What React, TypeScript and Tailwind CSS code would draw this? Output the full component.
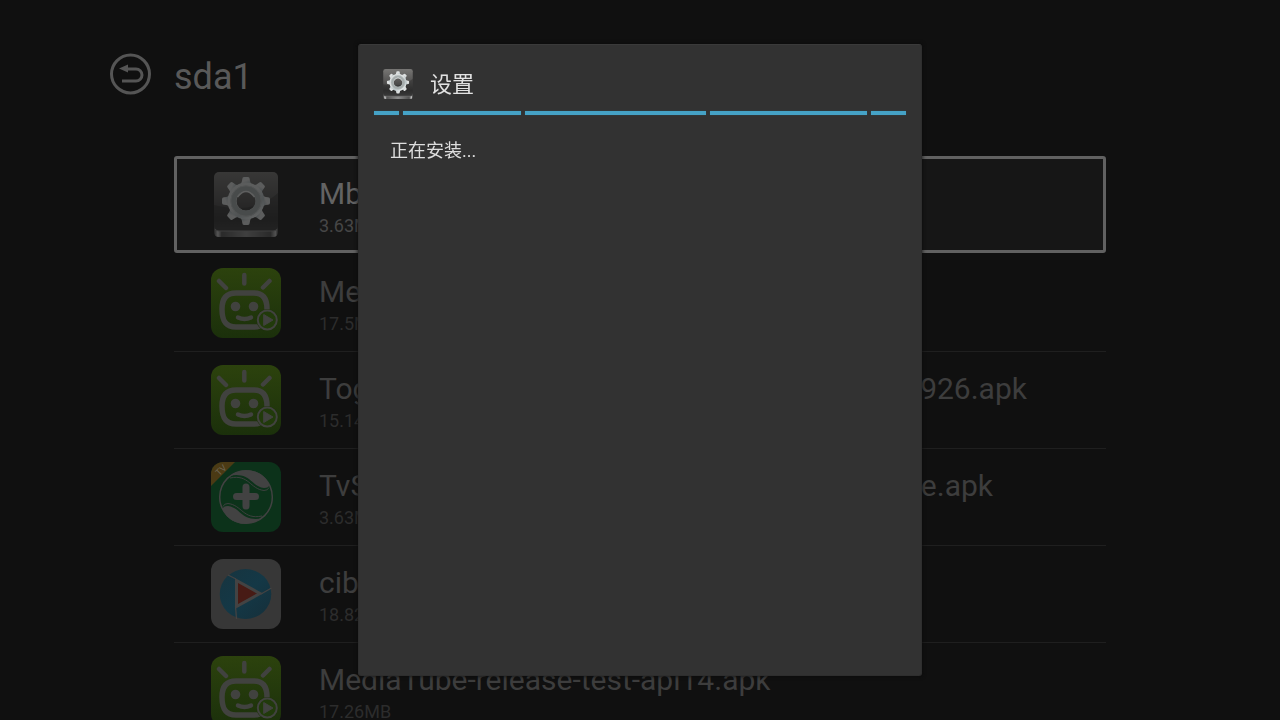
import { useId, type ReactNode } from "react";

const teeth = Array.from({ length: 8 }, (_, i) => i * 45);

function GearIcon({ className }: { className: string }) {
  const id = useId();
  return (
    <svg viewBox="0 0 64 65" className={className} aria-hidden="true">
      <defs>
        <linearGradient id={`${id}p`} x1="0" y1="0" x2="0" y2="1">
          <stop offset="0" stopColor="#777674" />
          <stop offset=".45" stopColor="#555453" />
          <stop offset=".8" stopColor="#343434" />
          <stop offset="1" stopColor="#4a4a4a" />
        </linearGradient>
        <linearGradient id={`${id}b`} x1="0" x2="1">
          <stop offset="0" stopColor="#424242" />
          <stop offset=".06" stopColor="#d0d0d0" />
          <stop offset=".12" stopColor="#505050" />
          <stop offset=".5" stopColor="#8c8c8c" />
          <stop offset=".88" stopColor="#505050" />
          <stop offset=".96" stopColor="#c0c0c0" />
          <stop offset="1" stopColor="#424242" />
        </linearGradient>
        <linearGradient id={`${id}g`} x1="0" y1="0" x2=".7" y2="1">
          <stop offset="0" stopColor="#d8dddd" />
          <stop offset=".5" stopColor="#e0e2e2" />
          <stop offset=".75" stopColor="#b8c3c6" />
          <stop offset="1" stopColor="#eff3f3" />
        </linearGradient>
      </defs>
      <path d="M0 53h64v7q0 5-5 5H5q-5 0-5-5z" fill={`url(#${id}b)`} />
      <rect width="64" height="59" rx="5" fill={`url(#${id}p)`} />
      <path d="M0 33Q40 43 64 21V54q0 5-5 5H5q-5 0-5-5z" fill="#222" opacity=".4" />
      <path d="M1 57q1.500 2 4 2h54q2.500 0 4-2" fill="none" stroke="#888" strokeWidth="1" />
      <g fill={`url(#${id}g)`}>
        {teeth.map((angle) => (
          <path key={angle} d="M24.500 14Q28 12 28.300 7 28.400 5 30 5h4Q35.600 5 35.700 7 36 12 39.500 14z" transform={`rotate(${angle} 32 29)`} />
        ))}
        <path fillRule="evenodd" d="M32 10.500a18.500 18.500 0 1 0 0 37 18.500 18.500 0 0 0 0-37zm0 9a9.500 9.500 0 1 1 0 19 9.500 9.500 0 0 1 0-19z" />
      </g>
      <circle cx="32" cy="29" r="12.600" fill="none" stroke="#a6adad" strokeWidth="5.500" />
      <circle cx="32" cy="29" r="15.200" fill="none" stroke="#c0c6c6" strokeWidth="1" />
      <path d="M23.500 25q8.500-11 17 0" fill="none" stroke="#e5e8e8" strokeWidth="1.500" />
    </svg>
  );
}

function MediaIcon() {
  const id = useId();
  return (
    <svg viewBox="0 0 70 70" className="size-[70px]" aria-hidden="true">
      <defs>
        <linearGradient id={id} x1="0" y1="0" x2="0" y2="1">
          <stop offset="0" stopColor="#2c420d" />
          <stop offset="1" stopColor="#1b300b" />
        </linearGradient>
      </defs>
      <rect width="70" height="70" rx="12" fill={`url(#${id})`} />
      <g fill="none" stroke="#41423f" strokeLinecap="round">
        <path d="M8 13l7 7M33.300 7v8.500M58.500 13l-6.500 6.500" strokeWidth="4.500" />
        <path d="M25 25h18c9 0 13 6 13 16s-2 18-13 18H25c-11 0-14-7-14-18s5-16 14-16z" strokeWidth="5.500" />
        <path d="M27 49.500q6.500 3 13 0" strokeWidth="4.500" />
      </g>
      <circle cx="24.500" cy="38.500" r="4.800" fill="#41423f" />
      <circle cx="42.500" cy="38.500" r="4.800" fill="#41423f" />
      <circle cx="56.300" cy="52" r="10.800" fill="#1e330b" />
      <circle cx="56.300" cy="52" r="9.500" fill="#213a0b" stroke="#41423f" strokeWidth="2" />
      <path d="M52.700 46.500v11l9.300-5.500z" fill="#41423f" stroke="#41423f" strokeLinejoin="round" />
    </svg>
  );
}

function CrossIcon() {
  const id = useId();
  return (
    <svg viewBox="0 0 70 70" className="size-[70px]" aria-hidden="true">
      <clipPath id={id}>
        <rect width="70" height="70" rx="12" />
      </clipPath>
      <g clipPath={`url(#${id})`}>
        <rect width="70" height="70" fill="#0c321a" />
        <path d="M0 0h24L0 24z" fill="#4b3a14" />
        <text x="-5" y="4" transform="translate(9 8) rotate(-45)" fontSize="9" fontFamily="Roboto, sans-serif" fill="#6b6452">TV</text>
      </g>
      <circle cx="35" cy="35" r="26.300" fill="none" stroke="#424242" strokeWidth="1.500" />
      {[0, 180].map((angle) => (
        <g key={angle} transform={`rotate(${angle} 35 35)`}>
          <path d="M19 14C30 5 51 6 58 22q1 4-5 4C43 25 40 15 30 13.500Q24 12.500 19 14z" fill="#424242" />
          <path d="M19 16c19-4 20 11 34 12.500q4 0 5-3" fill="none" stroke="#424242" strokeWidth=".9" />
        </g>
      ))}
      <path d="M35 25v19M25.500 34.500h19" stroke="#424242" strokeWidth="7" strokeLinecap="round" />
    </svg>
  );
}

function PlayerIcon() {
  const id = useId();
  return (
    <svg viewBox="0 0 70 70" className="size-[70px]" aria-hidden="true">
      <defs>
        <linearGradient id={id} x1="0" y1="0" x2="1" y2="1">
          <stop offset="0" stopColor="#17343f" />
          <stop offset=".5" stopColor="#143846" />
          <stop offset="1" stopColor="#152f3a" />
        </linearGradient>
      </defs>
      <rect width="70" height="70" rx="12" fill="#373737" />
      <ellipse cx="34.500" cy="35" rx="25.800" ry="25" fill={`url(#${id})`} />
      <path d="M25.500 21.500v26L49 34.500z" fill="#471b15" stroke="#434343" strokeWidth="3" />
      <path d="M17 16l8 4M50 35l10.500-6M24.500 47l1 13" fill="none" stroke="#434343" strokeWidth="1.300" />
    </svg>
  );
}

type FileEntry = { head: string; tail?: string; extent?: string; size: string; icon: ReactNode };

const files: FileEntry[] = [
  { head: "Mb", size: "3.63MB", icon: <GearIcon className="h-[65px] w-16 opacity-35" /> },
  { head: "Me", size: "17.5MB", icon: <MediaIcon /> },
  { head: "Tog", tail: "926.apk", extent: "w-[708px]", size: "15.14MB", icon: <MediaIcon /> },
  { head: "TvS", tail: "e.apk", extent: "w-[674px]", size: "3.63MB", icon: <CrossIcon /> },
  { head: "cib", size: "18.82MB", icon: <PlayerIcon /> },
  { head: "MediaTube-release-test-api14.apk", size: "17.26MB", icon: <MediaIcon /> },
];

function FileRow({ file, focused }: { file: FileEntry; focused: boolean }) {
  return (
    <li className={focused ? "mb-0.5" : "border-b border-[#1f1f1f]"}>
      <button
        type="button"
        className={
          focused
            ? "flex h-[97px] w-full items-center rounded-[3px] border-3 border-[#616161] bg-[#161616] pl-[34px] text-left"
            : "flex h-24 w-full items-center pl-[37px] text-left"
        }
      >
        <span className="flex w-[70px] shrink-0 justify-center">{file.icon}</span>
        <span className="ml-[38px] flex flex-col pt-1.5">
          <span
            className={`flex justify-between text-[30px] leading-9 whitespace-nowrap ${file.extent ?? ""} ${focused ? "text-[#636363]" : "text-[#3d3d3d]"}`}
          >
            <span>{file.head}</span>
            {file.tail && <span>{file.tail}</span>}
          </span>
          <span className={`text-lg leading-7 ${focused ? "text-[#464646]" : "text-[#2c2c2c]"}`}>{file.size}</span>
        </span>
      </button>
    </li>
  );
}

const segments = ["grow-25", "grow-118", "grow-181", "grow-157", "grow-35"];

function InstallDialog() {
  return (
    <div className="fixed inset-0 flex justify-center py-11">
      <section
        role="dialog"
        aria-labelledby="dialog-title"
        className="w-full max-w-[564px] rounded-[3px] border border-[#2e2e2e] border-t-[#3a3a3a] bg-[#323232] px-[15px] pt-6 shadow-[0_0_4px_#0a0a0a]"
      >
        <header className="flex h-[30px] items-start gap-[17px] pl-[9px]">
          <GearIcon className="size-[30px]" />
          <h2 id="dialog-title" className="text-[22px] leading-8 text-[#e2e2e2]">设置</h2>
        </header>
        <div role="progressbar" aria-labelledby="install-status" className="mt-3 flex gap-1">
          {segments.map((grow) => (
            <span key={grow} className={`h-1 basis-0 bg-[#45a2c6] shadow-[0_0_1px_#27667d] ${grow}`} />
          ))}
        </div>
        <p id="install-status" className="mt-[22px] pl-4 text-lg leading-7 text-[#dedede]">正在安装...</p>
      </section>
    </div>
  );
}

export default function App() {
  return (
    <div className="h-screen overflow-hidden bg-[#101010] font-[Roboto,'Noto_Sans_CJK_SC',sans-serif]">
      <main>
        <header className="flex h-[156px] items-start gap-[22px] pt-[53px] pl-[109px]">
          <button type="button" aria-label="Back" className="size-[43px] text-[#555555]">
            <svg viewBox="0 0 43 43" className="size-full" fill="none" stroke="currentColor" aria-hidden="true">
              <circle cx="21.500" cy="21" r="19" strokeWidth="3" />
              <path d="M17 16h10a6 6 0 0 1 0 12H13" strokeWidth="3" />
              <path d="M10 15.500l9-4v8z" fill="currentColor" stroke="none" />
            </svg>
          </button>
          <h1 className="text-4xl leading-[48px] text-[#595959]">sda1</h1>
        </header>
        <ul className="mx-[174px]">
          {files.map((file, i) => (
            <FileRow key={file.head} file={file} focused={i === 0} />
          ))}
        </ul>
      </main>
      <InstallDialog />
    </div>
  );
}
